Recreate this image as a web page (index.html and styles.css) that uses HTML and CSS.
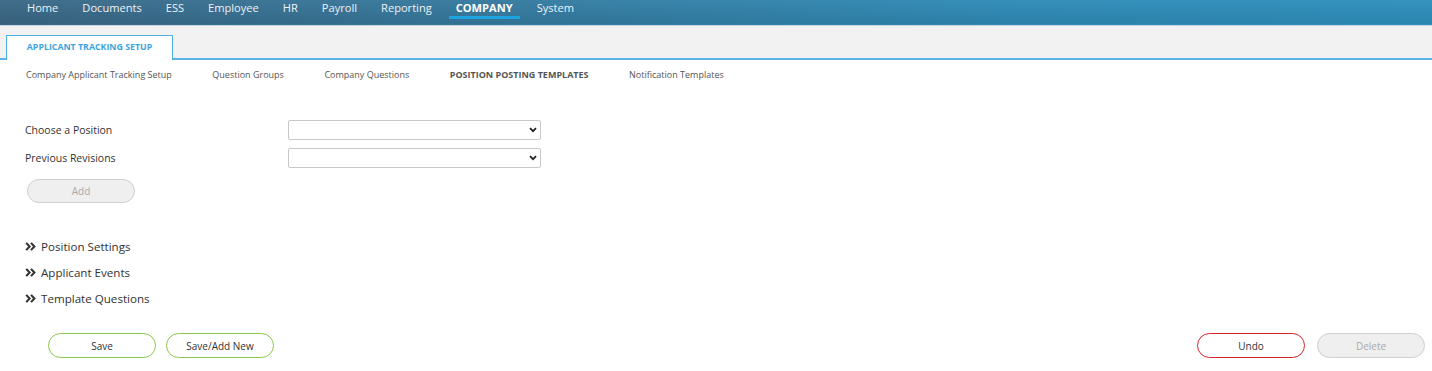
FILE: index.html
```html
<!DOCTYPE html>
<html>
<head>
<meta charset="utf-8">
<link rel="stylesheet" href="styles.css">
</head>
<body>
<header class="topbar">
  <nav class="mainnav">
    <a class="nav-item">Home</a>
    <a class="nav-item">Documents</a>
    <a class="nav-item">ESS</a>
    <a class="nav-item">Employee</a>
    <a class="nav-item">HR</a>
    <a class="nav-item">Payroll</a>
    <a class="nav-item">Reporting</a>
    <a class="nav-item active">COMPANY</a>
    <a class="nav-item">System</a>
  </nav>
</header>
<div class="tabband">
  <div class="tab">APPLICANT TRACKING SETUP</div>
</div>
<nav class="subnav">
  <a class="sub-item">Company Applicant Tracking Setup</a>
  <a class="sub-item">Question Groups</a>
  <a class="sub-item">Company Questions</a>
  <a class="sub-item active">POSITION POSTING TEMPLATES</a>
  <a class="sub-item">Notification Templates</a>
</nav>
<main class="content">
  <div class="form">
    <div class="row">
      <label class="label">Choose a Position</label>
      <div class="select"><svg class="caret" width="8" height="6" viewBox="0 0 8 6"><path d="M1 1.2 L4 4.2 L7 1.2" fill="none" stroke="#222" stroke-width="1.8"/></svg></div>
    </div>
    <div class="row">
      <label class="label">Previous Revisions</label>
      <div class="select"><svg class="caret" width="8" height="6" viewBox="0 0 8 6"><path d="M1 1.2 L4 4.2 L7 1.2" fill="none" stroke="#222" stroke-width="1.8"/></svg></div>
    </div>
    <button class="btn disabled add">Add</button>
  </div>
  <div class="sections">
    <div class="section"><svg class="chev" width="11" height="9" viewBox="0 0 11 9"><path d="M1.2 0.9 L4.6 4.5 L1.2 8.1 M6 0.9 L9.4 4.5 L6 8.1" fill="none" stroke="#333" stroke-width="2.1"/></svg>Position Settings</div>
    <div class="section"><svg class="chev" width="11" height="9" viewBox="0 0 11 9"><path d="M1.2 0.9 L4.6 4.5 L1.2 8.1 M6 0.9 L9.4 4.5 L6 8.1" fill="none" stroke="#333" stroke-width="2.1"/></svg>Applicant Events</div>
    <div class="section"><svg class="chev" width="11" height="9" viewBox="0 0 11 9"><path d="M1.2 0.9 L4.6 4.5 L1.2 8.1 M6 0.9 L9.4 4.5 L6 8.1" fill="none" stroke="#333" stroke-width="2.1"/></svg>Template Questions</div>
  </div>
  <div class="actions">
    <div class="group">
      <button class="btn green">Save</button>
      <button class="btn green">Save/Add New</button>
    </div>
    <div class="group right">
      <button class="btn red">Undo</button>
      <button class="btn disabled">Delete</button>
    </div>
  </div>
</main>
</body>
</html>
```

FILE: styles.css
```css
* { box-sizing: border-box; }
html, body { margin: 0; padding: 0; background: #fff; }
body { font-family: "Open Sans", "DejaVu Sans", sans-serif; color: #333; width: 1432px; height: 371px; overflow: hidden; }

.topbar {
  height: 26px;
  background: linear-gradient(to right, #3b6886 0%, #357ba0 35%, #2f8bb7 70%, #2e90bd 100%);
  border-bottom: 1px solid #c9d3dc;
  position: relative;
}
.topbar::after {
  content: ""; position: absolute; inset: 0 0 1px 0;
  background: linear-gradient(to bottom, rgba(255,255,255,0.03), rgba(0,0,0,0.08));
}
.mainnav { display: flex; padding-left: 20px; height: 25px; position: relative; z-index: 1; }
.nav-item {
  color: #eef2f6; font-size: 11.1px; line-height: 15px; padding: 0 7px;
  margin-right: 10px; height: 19px; border-bottom: 3px solid transparent;
}
.nav-item.active { font-weight: 700; border-bottom-color: #1ea3e0; color: #fff; }

.tabband {
  height: 34px; background: #f2f2f2; border-bottom: 2px solid #5ab5e6;
  padding-left: 6px; display: flex; align-items: flex-end;
}
.tab {
  width: 167px; background: #fff; border: 1.5px solid #4fb0e4; border-bottom: none;
  margin-bottom: -2px; height: 25px;
  color: #3ea4dc; font-size: 8.8px; font-weight: 700; text-align: center; line-height: 22px;
}

.subnav { display: flex; padding-left: 26px; height: 28px; align-items: center; }
.sub-item { font-size: 9px; color: #555; margin-right: 40.5px; }
.sub-item.active { font-weight: 700; color: #555; }

.form { padding: 28px 0 0 25px; }
.row { display: flex; align-items: center; height: 28px; }
.label { width: 263px; font-size: 10.5px; color: #333; }
.select {
  width: 253px; height: 20px; border: 1px solid #c9c9c9; border-radius: 2px; background: #fff;
  display: flex; align-items: center; justify-content: flex-end; padding-right: 3px;
}
.btn {
  font-family: "Open Sans", "DejaVu Sans", sans-serif; font-size: 10px; color: #333;
  width: 108px; height: 25px; border-radius: 13px; background: #fff; padding: 0;
  border: 1.5px solid #ccc;
}
.btn.disabled { background: #efefef; border-color: #cfcfcf; color: #aaa; }
.btn.add { margin-left: 2px; margin-top: 7px; height: 24px; }
.btn.green { border-color: #8cc84b; }
.btn.red { border-color: #d8242f; }

.sections { padding: 30px 0 0 25px; }
.section { font-size: 11.6px; color: #333; height: 26px; display: flex; align-items: center; }
.chev { margin-right: 5px; flex: none; }

.actions { display: flex; justify-content: space-between; padding: 22px 7px 0 48px; }
.group { display: flex; gap: 10px; }
.group.right { gap: 12px; }
```
